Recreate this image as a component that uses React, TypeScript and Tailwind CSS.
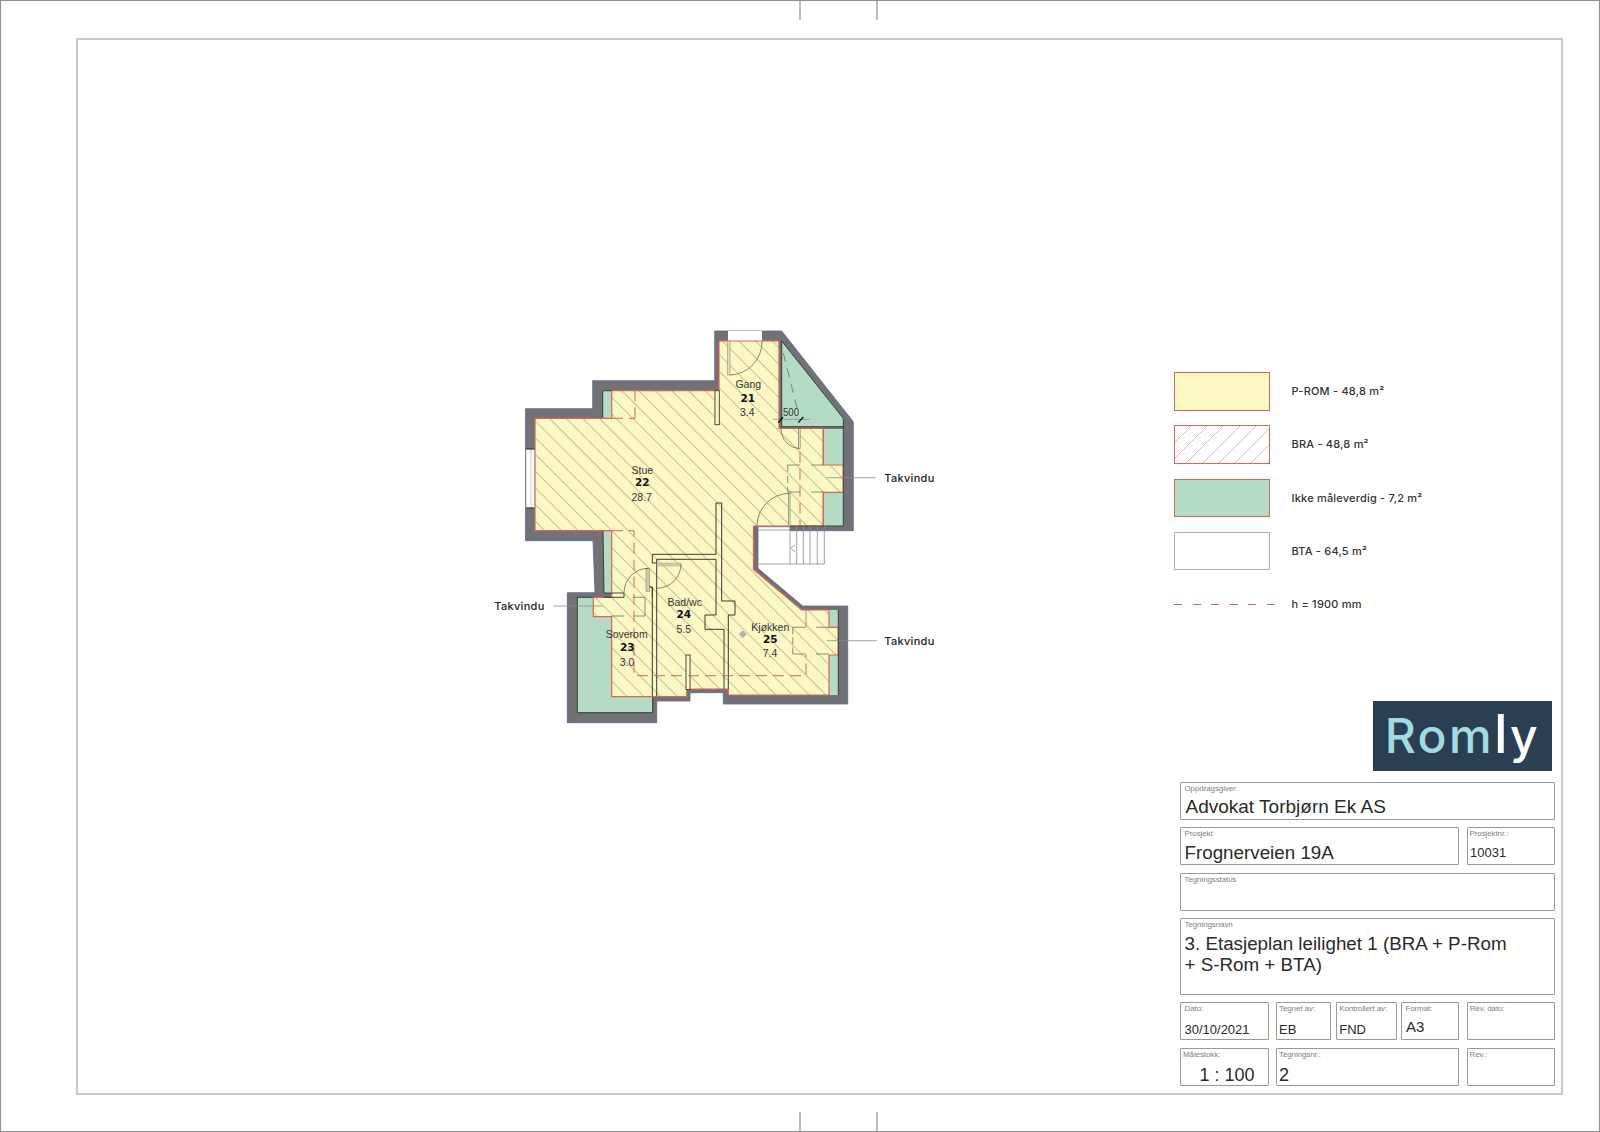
import React from "react";

const sans = "font-['Liberation_Sans',Arial,sans-serif]";
const label = "font-['Inter',sans-serif] font-medium text-[11px] tracking-[0.2px] text-[#333]";

function Box({ title, className = "", tall = false, tight = false, children }: { title: string; className?: string; tall?: boolean; tight?: boolean; children?: React.ReactNode }) {
  return (
    <div className={`${tall ? "h-[76.5px]" : "h-[38px]"} border border-[#999] rounded-[1px] shrink-0 overflow-hidden ${className}`}>
      <div className={`${tight ? "pl-[2px]" : "pl-[3.5px]"} text-[8px] leading-[10px] text-[#808080] pt-[1px] tracking-[-0.1px]`}>{title}</div>
      {children}
    </div>
  );
}

function Legend({ swatch, text }: { swatch: string; text: React.ReactNode }) {
  return (
    <div className="flex items-center h-[38.5px] mb-[14.8px]">
      <div className={`w-[96px] h-[38.5px] shrink-0 border ${swatch}`} />
      <span className={`ml-[21.5px] ${label}`}>{text}</span>
    </div>
  );
}

const RED = "#d9635a";
const DARK = "#3a3a30";
const OLIVE = "#77745a";

function Plan() {
  const wall =
    "M525.5,408.7 H592.7 V380.7 H714.7 V331 H781.7 L853.3,421.7 V530.7 H790 V526.7 H758 V568.3 L802.7,606 H847.7 V704 H723.3 V692.7 H690 V701 H656.7 V722.7 H567.3 V592.7 H595 L593,540.7 H525.5 Z";
  const floor =
    "M535,418.3 H611.7 V390.7 H719 V341 H779 V428.3 H823.3 V465 H843.3 V492.3 H823.3 V526 H753.5 V569.5 L801.7,610 H829 V627.3 H838.3 V655 H829 V695 H728.3 V689 H686.7 V696.7 H611.7 V616.7 H593.3 V597.3 H611.7 V530.7 H535 Z";
  return (
    <svg viewBox="480 320 460 410" className="w-[460px] h-[410px] ml-[402px] mt-[280px] shrink-0 block">
      <defs>
        <pattern id="hatch" patternUnits="userSpaceOnUse" width="11.8" height="11.8" patternTransform="translate(115 0) rotate(45)">
          <line x1="0" y1="0.3" x2="11.8" y2="0.3" stroke="#8f8e6c" strokeWidth="0.65" />
        </pattern>
      </defs>
      <path d={wall} fill="#727276" stroke="#5b6690" strokeWidth="0.8" />
      {/* white openings */}
      <rect x="728" y="331" width="34" height="10" fill="#fff" />
      <rect x="526" y="449" width="9" height="59" fill="#fff" stroke="#9a9a9a" strokeWidth="0.6" />
      <line x1="531" y1="449" x2="531" y2="508" stroke="#aaa" strokeWidth="0.6" />
      <path d="M526,449 H535 M526,508 H535" stroke="#222" strokeWidth="1" />
      {/* green areas */}
      <path d="M602.7,390.7 H612 V418.3 H602.7 Z" fill="#b4dcc4" />
      <path d="M603,530.7 H612 V593 H604 Z" fill="#b4dcc4" />
      <path d="M577.3,597.3 H652.7 V712.7 H577.3 Z" fill="#b4dcc4" stroke="#2d3a33" strokeWidth="1" />
      <path d="M781.7,341 L843.3,418.3 V426.7 H781.7 Z" fill="#b4dcc4" />
      <path d="M823,429 H843.3 V526 H823 Z" fill="#b4dcc4" />
      <path d="M829,610 H838.3 V695 H829 Z" fill="#b4dcc4" />
      {/* floor */}
      <path d={floor} fill="#fbf8c4" />
      <path d={floor} fill="url(#hatch)" />
      <path d={floor} fill="none" stroke={RED} strokeWidth="1.2" />
      <path d="M823.3,428.3 V465 M823.3,492.3 V526" stroke={RED} strokeWidth="1.2" fill="none" />

      {/* dark outlines */}
      <path d="M781.7,341 V426.7 H843.3 M843.3,418.3 V526 H790 M781.7,341 L843.3,418.3" fill="none" stroke="#2c332e" strokeWidth="0.9" />
      <path d="M838.3,610 V695" stroke="#2c332e" strokeWidth="0.9" />
      <path d="M602.7,390.7 V418 M603,531 L604,593 H624 V597.3 H604" fill="none" stroke="#2c332e" strokeWidth="0.9" />
      <path d="M603,390.7 H612" stroke="#2c332e" strokeWidth="0.9" />
      {/* interior walls */}
      <rect x="715" y="390.7" width="4.3" height="34" fill="#fbf8c4" stroke={DARK} strokeWidth="0.9" />
      <path
        d="M721.7,503 V601 H735 V615 H728.3 V689 M716,503 H721.7 M716,503 V554.3 H652.3 V563 H656.7 M716,559.3 H656.7 V696 M716,559.3 V615 H705 V629.3 H724 V689 M652.3,587 V696 M647.5,587 H652.3 V597"
        fill="none"
        stroke={DARK}
        strokeWidth="1"
      />
      <rect x="686" y="655" width="4" height="34.5" fill="#fbf8c4" stroke={DARK} strokeWidth="0.9" />
      {/* doors */}
      <rect x="727.7" y="341" width="2.3" height="34" fill="#e6e2ae" stroke="#8a8a78" strokeWidth="0.6" />
      <path d="M730,375 A33,33 0 0 0 762,341" fill="none" stroke="#555" strokeWidth="0.7" />
      <rect x="798.3" y="428.3" width="1.8" height="20" fill="#fbf8c4" stroke="#555" strokeWidth="0.6" />
      <path d="M781,428.3 A18.5,20 0 0 0 799,448.3" fill="none" stroke="#555" strokeWidth="0.7" />
      <rect x="788.3" y="493.3" width="1.7" height="33" fill="#fbf8c4" stroke="#666" strokeWidth="0.6" />
      <path d="M789,493.3 A33,33 0 0 0 757,526" fill="none" stroke="#555" strokeWidth="0.7" />
      <rect x="646" y="568.3" width="3.5" height="23.4" fill="#cfcc9f" stroke="#777" strokeWidth="0.5" />
      <path d="M648.3,568.3 A24.3,24.3 0 0 0 624,592.7" fill="none" stroke="#555" strokeWidth="0.7" />
      <rect x="657" y="563" width="24" height="3" fill="#cfcc9f" stroke="#999" strokeWidth="0.4" />
      <path d="M681,564 A24.3,24.3 0 0 1 656.7,588.3" fill="none" stroke="#555" strokeWidth="0.7" />
      {/* dashed red height line */}
      <g fill="none" stroke={RED} strokeWidth="1" strokeDasharray="11 6">
        <path d="M635,418.3 V390.7" />
        <path d="M612,418.3 H635" />
        <path d="M612,530.7 H634 V675.7 H806 V655" />
        <path d="M800,451.7 V526" />
      </g>
      <path d="M806,627 V610" stroke="#a5705a" strokeWidth="0.8" />
      {/* roof windows */}
      <g fill="none" stroke={OLIVE} strokeWidth="0.8">
        <path d="M787.7,465 H800 M811,465 H823.3 M787.7,492 H800 M811,492 H823.3" />
        <path d="M787.7,465 V492" strokeDasharray="7 4" />
        <path d="M792.7,627.3 H806 M816,627.3 H829 M792.7,654 H806 M816,654 H829" />
        <path d="M792.7,627.3 V654" strokeDasharray="7 3" />
        <path d="M611.7,616 H624 M633.3,597.3 H645 V616 H633.3" />
      </g>
      {/* stairs */}
      <g fill="none" stroke="#8a8a8a" strokeWidth="0.8">
        <path d="M758.3,530 H790 M758.3,564 H824.3 M790,526 V564 M796.7,526 V564 M803.3,526 V564 M810,526 V564 M817.3,526 V564 M824.3,526 V564" />
        <path d="M795,545 L790.5,548 L795,552" />
      </g>
      {/* dimension */}
      <path d="M783.3,353 L798.3,413" stroke="#444" strokeWidth="0.6" strokeDasharray="9 7" fill="none" />
      <path d="M772.7,419.3 H810" stroke="#777" strokeWidth="0.6" />
      <path d="M778.3,422.6 L783,417 M798.3,422.6 L803.3,417" stroke="#111" strokeWidth="1.4" />
      <text x="791" y="416" textAnchor="middle" fontSize="10.5" fill="#333" className={sans} textLength="16" lengthAdjust="spacingAndGlyphs">500</text>
      {/* leaders */}
      <path d="M826.7,477.7 H875.7 M826.7,640.7 H876.7 M553.3,606 H603" stroke="#8a8a8a" strokeWidth="0.8" />
      <rect x="740.2" y="631.8" width="5" height="5" transform="rotate(45 742.7 634.3)" fill="#b5b5a5" stroke="#888" strokeWidth="0.4" />
      {/* labels */}
      <g className="font-['Inter',sans-serif] font-medium" fontSize="11" fill="#222" letterSpacing="0.3">
        <text x="884.3" y="481.5">Takvindu</text>
        <text x="884.3" y="644.5">Takvindu</text>
        <text x="494.3" y="610.3">Takvindu</text>
      </g>
      <g className={sans} fontSize="10.5" fill="#333" textAnchor="middle">
        <text x="642.3" y="473.5">Stue</text>
        <text x="641.7" y="500.5">28.7</text>
        <text x="748.3" y="388">Gang</text>
        <text x="747.3" y="415.5">3.4</text>
        <text x="626.7" y="638">Soverom</text>
        <text x="627" y="665.5">3.0</text>
        <text x="684.7" y="606">Bad/wc</text>
        <text x="683.7" y="632.5">5.5</text>
        <text x="770.3" y="630.5">Kjøkken</text>
        <text x="770" y="657">7.4</text>
      </g>
      <g className="font-['DejaVu_Sans',sans-serif] font-bold" fontSize="10.5" fill="#111" textAnchor="middle">
        <text x="642.3" y="486.3">22</text>
        <text x="747.7" y="401.6">21</text>
        <text x="627.3" y="651">23</text>
        <text x="683.7" y="618.3">24</text>
        <text x="770.3" y="643">25</text>
      </g>
    </svg>
  );
}

const dashes = [0, 1, 2, 3, 4, 5];

function Side() {
  return (
    <div className="w-[387px] ml-auto shrink-0 pt-[332px] flex flex-col">
      <Legend swatch="bg-[#fbf8c4] border-[#d9635a]" text="P-ROM - 48,8 m²" />
      <Legend swatch="border-[#d9635a] bg-[repeating-linear-gradient(135deg,transparent_0,transparent_10.8px,#e6b3b0_10.8px,#e6b3b0_11.5px)]" text="BRA - 48,8 m²" />
      <Legend swatch="bg-[#b4dcc4] border-[#d9635a]" text="Ikke måleverdig - 7,2 m²" />
      <Legend swatch="border-[#aab0b8]" text="BTA - 64,5 m²" />
      <div className="flex items-center mt-[9px] h-[20px]">
        <div className="w-[101px] flex justify-between shrink-0">
          {dashes.map((d) => (
            <div key={d} className="w-[8px] h-px bg-[#d9635a]" />
          ))}
        </div>
        <span className={`ml-[16.5px] ${label}`}>h = 1900 mm</span>
      </div>
      <div className="ml-[198.7px] mt-[87.2px] w-[179.6px] h-[69.5px] bg-[#2a4052] flex items-start pl-[12px] overflow-hidden">
        <span className="font-['Inter',sans-serif] font-medium text-[48px] leading-[70px] tracking-[2.4px] text-[#a2dbe0] whitespace-nowrap">
          Rom<span className="text-white"><span className="text-[54px] leading-[0]">l</span>y</span>
        </span>
      </div>
      <div className={`ml-[6px] mt-[10.8px] w-[374.5px] flex flex-col gap-[7.5px] text-[#2a2a2a] ${sans}`}>
        <Box title="Oppdragsgiver:">
          <div className="pl-[4.5px] pt-[1px] text-[19px] leading-[23px]">Advokat Torbjørn Ek AS</div>
        </Box>
        <div className="flex justify-between">
          <Box title="Prosjekt" className="w-[279px]">
            <div className="pl-[3.5px] pt-[2px] text-[18.8px] leading-[23px]">Frognerveien 19A</div>
          </Box>
          <Box title="Prosjektnr.:" tight className="w-[88px]">
            <div className="pl-[2.5px] pt-[4.5px] text-[13px] leading-[18px]">10031</div>
          </Box>
        </div>
        <Box title="Tegningsstatus" />
        <Box title="Tegningsnavn" tall>
          <div className="pl-[3.5px] pt-[2.5px] text-[18.8px] leading-[21.7px]">
            3. Etasjeplan leilighet 1 (BRA + P-Rom
            <br />+ S-Rom + BTA)
          </div>
        </Box>
        <div className="flex">
          <Box title="Dato:" className="w-[89px]">
            <div className="pl-[3.5px] pt-[7px] text-[13px] leading-[18px]">30/10/2021</div>
          </Box>
          <Box title="Tegnet av:" tight className="w-[54.5px] ml-[7px]">
            <div className="pl-[2px] pt-[7px] text-[13px] leading-[18px]">EB</div>
          </Box>
          <Box title="Kontrollert av:" tight className="w-[60.7px] ml-[5.7px]">
            <div className="pl-[2px] pt-[7px] text-[13px] leading-[18px]">FND</div>
          </Box>
          <Box title="Format:" className="w-[58.3px] ml-[4px]">
            <div className="pl-[4px] pt-[4px] text-[15px] leading-[18px]">A3</div>
          </Box>
          <Box title="Rev. dato:" tight className="w-[88px] ml-[7.5px]" />
        </div>
        <div className="flex">
          <Box title="Målestokk:" tight className="w-[89px]">
            <div className="pl-[18.5px] pt-[4px] text-[18px] leading-[22px] whitespace-nowrap">1 : 100</div>
          </Box>
          <Box title="Tegningsnr.:" tight className="w-[183px] ml-[7px]">
            <div className="pl-[2px] pt-[4px] text-[18px] leading-[22px]">2</div>
          </Box>
          <Box title="Rev.:" tight className="w-[88px] ml-[7.5px]" />
        </div>
      </div>
    </div>
  );
}

export default function App() {
  return (
    <div className={`w-[1600px] h-[1132px] bg-white border border-[#8f8f8f] flex flex-col overflow-hidden ${sans}`}>
      <div className="h-[37px] shrink-0">
        <div className="ml-[798px] w-[79px] h-[19px] border-x-2 border-[#bbbbbb]" />
      </div>
      <div className="ml-[75px] w-[1487px] h-[1057px] shrink-0 border-2 border-[#c8c8c8] flex">
        <Plan />
        <Side />
      </div>
      <div className="flex-1 flex flex-col justify-end">
        <div className="ml-[798px] w-[79px] h-[19px] border-x-2 border-[#bbbbbb]" />
      </div>
    </div>
  );
}
